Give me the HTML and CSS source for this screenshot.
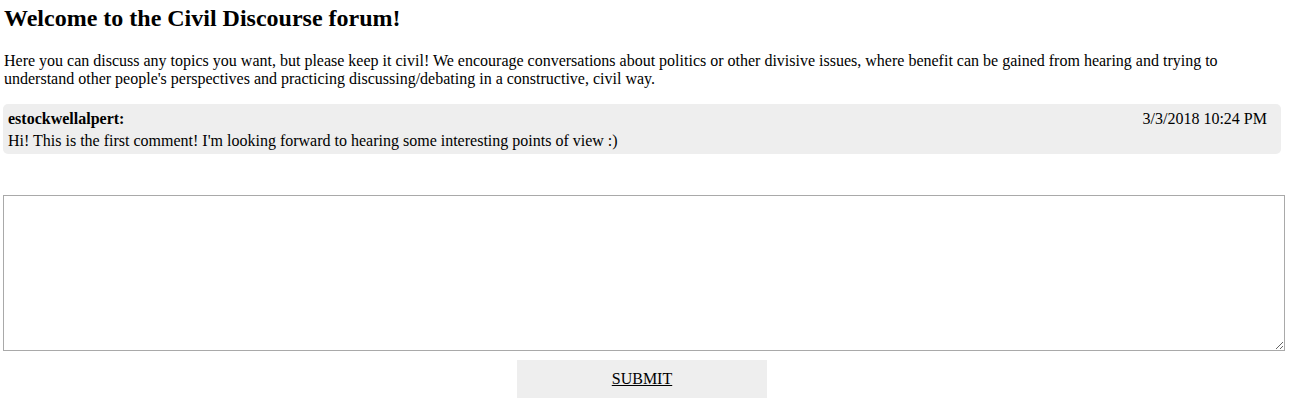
FILE: index.html
```html
<!DOCTYPE html>
<html>
<head>
<meta charset="utf-8">
<link rel="stylesheet" href="styles.css">
</head>
<body>
<div class="page">
  <h1 class="title">Welcome to the Civil Discourse forum!</h1>
  <p class="intro">Here you can discuss any topics you want, but please keep it civil! We encourage conversations about politics or other divisive issues, where benefit can be gained from hearing and trying to understand other people's perspectives and practicing discussing/debating in a constructive, civil way.</p>
  <div class="comment">
    <div class="comment-head">
      <span class="author">estockwellalpert:</span>
      <span class="date">3/3/2018 10:24 PM</span>
    </div>
    <div class="comment-body">Hi! This is the first comment! I'm looking forward to hearing some interesting points of view :)</div>
  </div>
  <textarea class="entry"></textarea>
  <div class="actions">
    <a class="submit" href="#">SUBMIT</a>
  </div>
</div>
</body>
</html>
```
FILE: styles.css
```css
html, body {
  margin: 0;
  padding: 0;
  background: #fff;
}
.page {
  padding: 0 10px 0 3px;
  font-family: "Liberation Serif", "Times New Roman", serif;
  color: #000;
}
.title {
  font-size: 24px;
  font-weight: bold;
  margin: 4px 0 0 1px;
  line-height: 28px;
}
.intro {
  font-size: 16px;
  line-height: 18px;
  margin: 20px 0 0 1px;
}
.comment {
  margin: 16px 4px 0 0;
  background: #eeeeee;
  border-radius: 5px;
  padding: 6px 14px 4px 5px;
  font-size: 16px;
}
.comment-head {
  display: flex;
  justify-content: space-between;
  line-height: 18px;
  margin-bottom: 4px;
}
.author {
  font-weight: bold;
}
.comment-body {
  line-height: 18px;
}
.entry {
  display: block;
  box-sizing: border-box;
  width: 100%;
  height: 156px;
  margin-top: 41px;
  border: 1px solid #a9a9a9;
  padding: 2px;
  font-family: "Liberation Mono", monospace;
  resize: both;
}
.actions {
  display: flex;
  justify-content: center;
  padding: 9px 4px 0 0;
}
.submit {
  display: block;
  width: 250px;
  height: 38px;
  line-height: 38px;
  text-align: center;
  background: #eeeeee;
  color: #000;
  font-size: 16px;
  text-decoration: underline;
}
```
